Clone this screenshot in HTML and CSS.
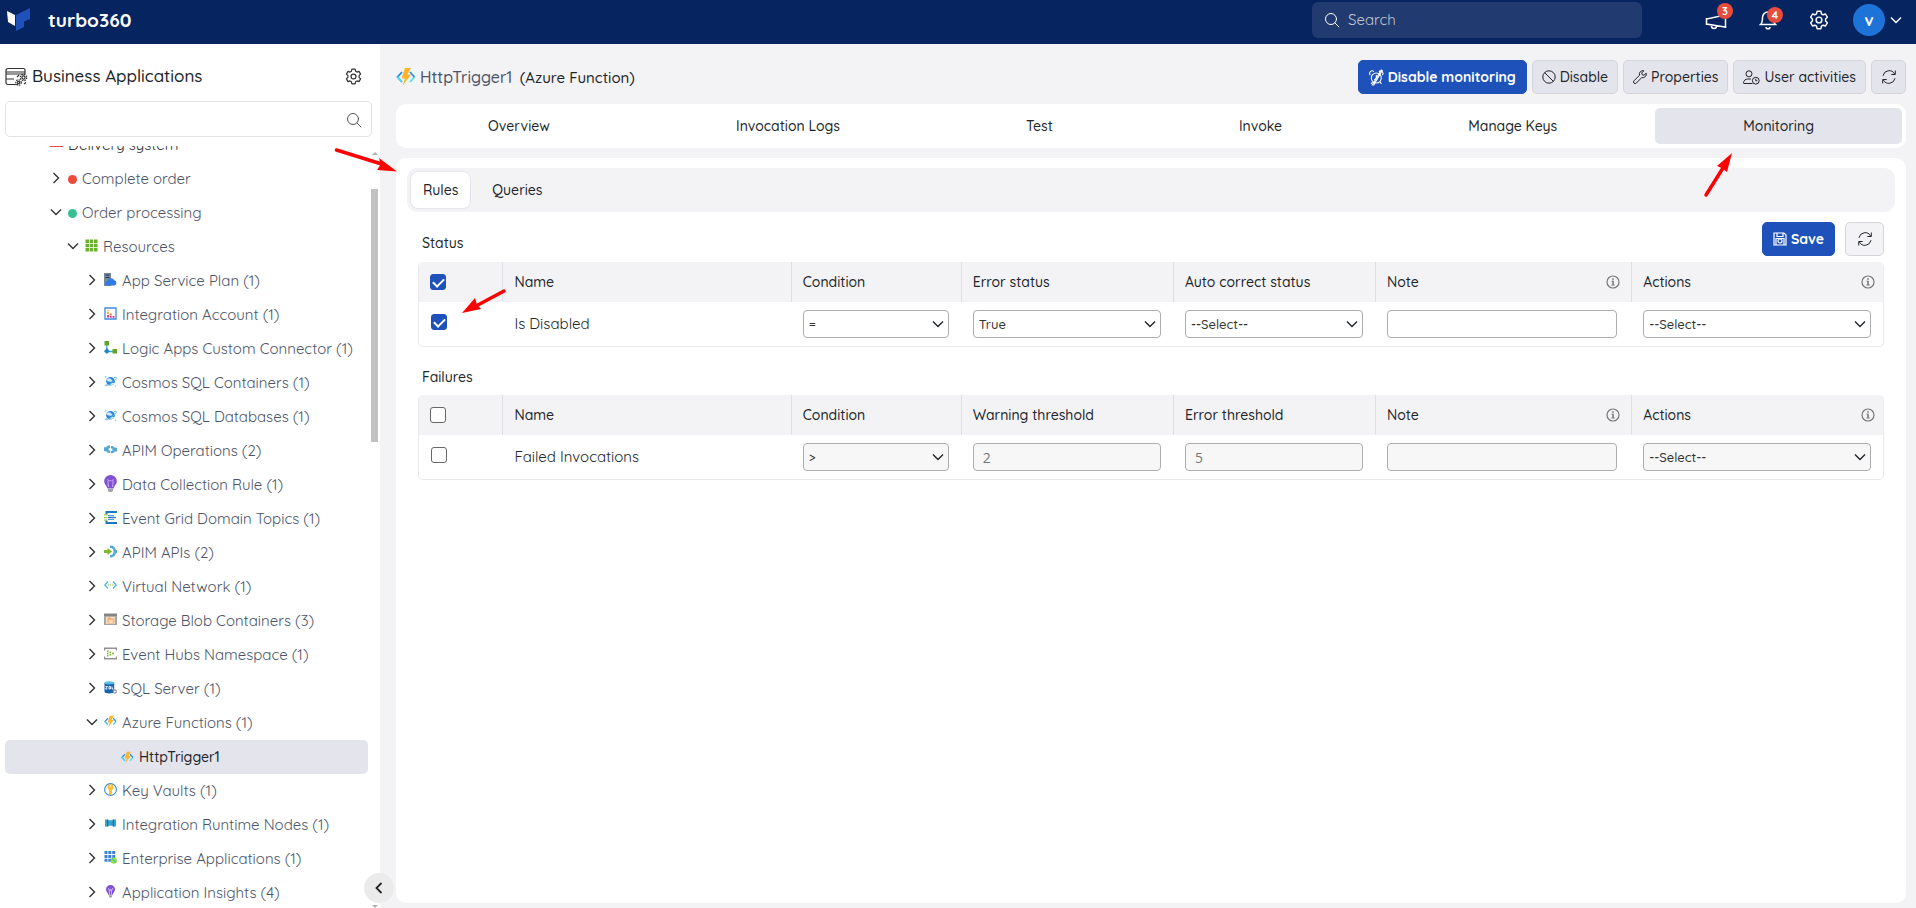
FILE: index.html
```
<!DOCTYPE html>
<html lang="en">
<head>
<meta charset="utf-8">
<title>turbo360 - HttpTrigger1 monitoring</title>
<link rel="stylesheet" href="styles.css">
</head>
<body>
<svg class="sprite" aria-hidden="true">
  <symbol id="i-search" viewBox="0 0 16 16"><g fill="none" stroke="currentColor" stroke-linecap="round"><circle cx="7" cy="7" r="5.5"/><path d="M11 11l4 4"/></g></symbol>
  <symbol id="i-gear" viewBox="0 0 18 18"><g fill="none" stroke="currentColor" stroke-width="1.3" stroke-linejoin="round"><path d="M7.3 1.2h3.4l.5 2.2 1.5.9 2.1-.7 1.7 2.9-1.600 1.600v1.800l1.600 1.600-1.700 2.900-2.100-.7-1.500.9-.5 2.200H7.300l-.5-2.200-1.500-.9-2.100.7-1.700-2.900 1.600-1.600V8.100L1.500 6.500l1.700-2.900 2.100.7 1.500-.9z"/><circle cx="9" cy="9" r="2.600"/></g></symbol>
  <symbol id="i-right" viewBox="0 0 14 14"><path d="M4.500 2l5 5-5 5" fill="none" stroke="currentColor" stroke-width="1.400"/></symbol>
  <symbol id="i-down" viewBox="0 0 14 14"><path d="M2 4.500l5 5 5-5" fill="none" stroke="currentColor" stroke-width="1.400"/></symbol>
  <symbol id="i-left" viewBox="0 0 14 14"><path d="M9.500 2l-5 5 5 5" fill="none" stroke="currentColor" stroke-width="1.800"/></symbol>
  <symbol id="i-refresh" viewBox="0 0 16 16"><g fill="none" stroke="currentColor"><path d="M2 6.800A6.200 6.200 0 0 1 13.600 5M14 9.200A6.200 6.200 0 0 1 2.400 11"/><path d="M14.300 1.500v4h-4M1.700 14.500v-4h4"/></g></symbol>
  <symbol id="i-info" viewBox="0 0 14 14"><circle cx="7" cy="7" r="6" fill="none" stroke="currentColor" stroke-width="1.200"/><path d="M6.200 3.200h1.600v1.500H6.200zM5.500 5.800h2.300v3.700h.9v.9H5.400v-.9h.9V6.700h-.8z" fill="currentColor"/></symbol>
  <symbol id="i-function" viewBox="0 0 20 18"><path d="M6 4L1.500 9 6 14" fill="none" stroke="#1f8fe0" stroke-width="1.800"/><path d="M1.500 9L6 14M18.500 9L14 14" fill="none" stroke="#4fdcf5" stroke-width="1.800"/><path d="M14 4l4.500 5" fill="none" stroke="#1f8fe0" stroke-width="1.800"/><path d="M9 0h6l-3.500 6.500H15L6.500 18 9 10.500H5.500z" fill="#fdb32b"/></symbol>
  <symbol id="i-grid" viewBox="0 0 13 13"><path d="M.5.500h3.500v3.500H.5zM4.700.5h3.500v3.500H4.700zM9 .5h3.500v3.500H9zM.5 4.700h3.500v3.500H.5zM4.700 4.700h3.500v3.500H4.700zM9 4.700h3.500v3.500H9zM.5 9h3.500v3.500H.5zM4.700 9h3.500v3.500H4.700zM9 9h3.500v3.500H9z" fill="#6bb02c"/></symbol>
  <symbol id="i-plan" viewBox="0 0 13 13"><path d="M0 0h7v13H0z" fill="#7c8791"/><path d="M1.500 1.500h4v1h-4zM1.500 4h4v1h-4z" fill="#123a72"/><path d="M3.500 12.500a2.300 2.300 0 0 1 0-4.600 3.600 3.600 0 0 1 6.800-.6 2.700 2.700 0 0 1 .2 5.200z" fill="#2f7be4"/></symbol>
  <symbol id="i-account" viewBox="0 0 13 13"><path d="M1 1h11v11H1z" fill="#fff" stroke="#3f87e5" stroke-width="1.300"/><path d="M3 5h2v2H3z" fill="#f6b53a"/><path d="M3 2.700h2v1.800H3z" fill="#f9d27a"/><path d="M3 8h2v2.500H3z" fill="#e0446b"/><path d="M5.700 6.500h2v2h-2z" fill="#ef6a50"/><path d="M6 9h1.700v1.700H6zM8.500 9h2v1.700h-2z" fill="#c83b97"/></symbol>
  <symbol id="i-logic" viewBox="0 0 13 13"><path d="M2.800 4v6.500H9" stroke="#45a5dd" stroke-width="1.300" fill="none"/><path d="M.5 0h4.500v4.500H.5zM8.500 8H13v4.500H8.500z" fill="#62a324"/><path d="M2.800 7l3 3.200-3 2.800-2.800-2.800z" fill="#2286c9"/></symbol>
  <symbol id="i-cosmos" viewBox="0 0 13 13"><circle cx="6.500" cy="6.200" r="4.300" fill="#2f86d8"/><path d="M3 4.300c1.500-1.800 3.400-.8 4.300.1s1.800 1 .7 1.800-3.300.8-5-.4zM6 9c1-1.200 3.300-1.200 4.300-.7C9.500 9.600 8 10.500 6.800 10.300z" fill="#c6e8f9"/><path d="M2.600 9.300c-2 1-1.800 2 .6 1.200s8.400-5 9-7-1-1.300-2.400-.7" fill="none" stroke="#55b5e8"/><path d="M1.800.500l.4 1 1 .4-1 .4-.4 1-.4-1-1-.4 1-.4zM11.500 10l.3.800.8.300-.8.300-.3.800-.3-.8-.8-.3.800-.3z" fill="#5cd5ef"/></symbol>
  <symbol id="i-ops" viewBox="0 0 13 13"><path d="M6 2.500H4.500a2.500 2.500 0 0 0-2.200 1.800H0v3.900h2.300A3 3 0 0 0 5 10h1.200V7.500H4.700V5.300H6zM7 3h1.200a3 3 0 0 1 2.500 1.700H13v3.800h-2.300A2.700 2.700 0 0 1 8.200 10.200H7V7.900h1.400V5.600H7z" fill="#52a8d2"/></symbol>
  <symbol id="i-bulb" viewBox="0 0 13 17"><path d="M6.500 0a6.300 6.300 0 0 1 6.300 6.200c0 3-2.500 4-3.200 7.300H3.400C2.700 10.200.2 9.200.2 6.200A6.300 6.300 0 0 1 6.500 0z" fill="#8350d4"/><path d="M4.500 12L3.800 5.500M8.500 12l.7-6.500M3.500 4.200l2 2 1-1 1 1 2-2" stroke="#d2b5f5" stroke-width=".9" fill="none"/><path d="M4 14h5v1.500l-1 1.500H5l-1-1.500z" fill="#a4a4aa"/></symbol>
  <symbol id="i-topics" viewBox="0 0 13 13"><path d="M1.500 0H13v2H3.500v1.500h-2zM1.500 13H13v-2H3.500V9.500h-2z" fill="#2273c3"/><path d="M4 4.700h6M4 8.300h6" stroke="#4d9fe0" stroke-width="1.200"/><path d="M0 3.300h3v1.300H0zM0 6h3.500v1.200H0zM0 8.500h3v1.300H0z" fill="#a6c84a"/><path d="M4 6.500h8" stroke="#2273c3" stroke-width="1.200"/></symbol>
  <symbol id="i-apis" viewBox="0 0 13 13"><path d="M6 .5C9 .2 11.300 2 12 5h1v3h-1c-.7 3-3 4.800-6 4.500V10c2.500.3 3.500-1.500 3.500-3.500S8.500 2.700 6 3z" fill="#59abd4"/><path d="M0 5h3.500V3L8 6.500 3.500 10V8H0z" fill="#7db928"/></symbol>
  <symbol id="i-vnet" viewBox="0 0 13 13"><path d="M4 2.500L.8 6 4 9.500M9 2.500L12.200 6 9 9.500" fill="none" stroke="#46b8ea" stroke-width="1.300"/><path d="M3.500 5.400h1.200v1.200H3.500zM5.900 5.400h1.200v1.200H5.900zM8.300 5.400h1.200v1.200H8.300z" fill="#75b52b"/></symbol>
  <symbol id="i-blob" viewBox="0 0 13 13"><path d="M0 .5h13v2.500H0z" fill="#858585"/><path d="M0 3h13v9H0z" fill="#a5a5a5"/><path d="M2 3.800h9V11H2z" fill="#f3e3d2"/><path d="M3.500 4.500h3l1 1h2.800v5H3.500z" fill="#f0a366"/><path d="M4.500 6.500h4.800v3.500H4.500z" fill="#fbd9b8"/></symbol>
  <symbol id="i-hubs" viewBox="0 0 13 13"><path d="M0 .5h13v3h-1.300V2H1.300v1.500H0zM0 12.500h13v-3h-1.300V11H1.300V9.500H0z" fill="#929292"/><path d="M3 3.500h1.500V5H3zM3 5.800h1.500v1.500H3zM3 8h1.500v1.500H3zM5.500 4.500H7V6H5.500zM5.500 7H7v1.500H5.500zM8 5.800h2v1.500H8z" fill="#7dbb35"/></symbol>
  <symbol id="i-sql" viewBox="0 0 13 13"><path d="M.5 1.800v9c0 1 2.300 1.700 4.800 1.700s4.900-.7 4.900-1.700v-9z" fill="#1763ad"/><ellipse cx="5.300" cy="1.800" rx="4.800" ry="1.600" fill="#57c1ea"/><path d="M1.500 5.500h2L1.500 8h2M5 5.500h1.500V8H5zM8 5.500V8h1.500" stroke="#fff" stroke-width=".9" fill="none"/><circle cx="10.800" cy="10.500" r="1.600" fill="#fff" stroke="#8a8f96" stroke-width="1.100"/></symbol>
  <symbol id="i-vault" viewBox="0 0 13 13"><circle cx="6.500" cy="6.500" r="5.900" fill="#fff" stroke="#3989d6" stroke-width="1.100"/><path d="M6.500 1a3.200 3.200 0 0 1 1.400 6v3.500l-1.400 1.700-1.400-1.700V7a3.200 3.200 0 0 1 1.400-6z" fill="#fbc02d"/><circle cx="6.500" cy="3" r=".8" fill="#fff"/></symbol>
  <symbol id="i-runtime" viewBox="0 0 13 13"><path d="M1 2.500h2.700l.8.800h4l.8-.8H12v7H9.300l-.8-.8h-4l-.8.800H1z" fill="#37a3cf"/><path d="M3 2.500h1.200v7H3zM8.800 2.500H10v7H8.800z" fill="#1c6fa0"/></symbol>
  <symbol id="i-enterprise" viewBox="0 0 13 13"><path d="M.5 0h3v3h-3zM4.300 0h3v3h-3zM8.200 0h3v3h-3zM.5 3.900h3v3h-3zM4.300 3.900h3v3h-3zM8.200 3.900h3v3h-3zM.5 7.800h3v3h-3zM4.300 7.800h3v3h-3z" fill="#3b82d6"/><circle cx="9.800" cy="9.600" r="3.200" fill="#8fdc4f"/><path d="M8 8l4 3.500" stroke="#43b9a5"/></symbol>
  <symbol id="i-insights" viewBox="0 0 13 13"><path d="M6.500 0A4.400 4.400 0 0 1 11 4.300C11 6.500 9.200 7.500 8.700 9.800H4.300C3.800 7.500 2 6.500 2 4.300A4.400 4.400 0 0 1 6.500 0z" fill="#8350d4"/><path d="M4.300 3l1.200 3 1-2 1 2 1.200-3M5.500 6v3.500M7.500 6v3.500" stroke="#e0cdf9" stroke-width=".8" fill="none"/><path d="M4.700 10.200h3.600l-.7 2.300H5.400z" fill="#9a9aa3"/></symbol>
</svg>

<header class="topbar">
  <a class="brand" href="#" aria-label="turbo360 home">
    <svg class="brand-mark" viewBox="0 0 24 24" aria-hidden="true"><path d="M0 3l8 4v11l-7-4z" fill="#fff"/><path d="M23 0v11l-6 2.500v5.500l-8 4V7z" fill="#1e52ba"/></svg>
    <span>turbo360</span>
  </a>
  <label class="global-search">
    <svg width="16" height="16" aria-hidden="true"><use href="#i-search"/></svg>
    <input type="search" placeholder="Search" aria-label="Search">
  </label>
  <div class="top-actions">
    <button class="top-button" aria-label="Announcements">
      <svg width="22" height="22" viewBox="0 0 22 22" fill="none" stroke="currentColor" stroke-width="1.500" aria-hidden="true"><path d="M20.500 5v14M20 6L1.500 10v5L20 18M1.500 9v7M6.500 16v1a2.500 2.500 0 0 0 5 0"/></svg>
      <span class="badge">3</span>
    </button>
    <button class="top-button" aria-label="Notifications">
      <svg width="18" height="20" viewBox="0 0 18 20" fill="none" stroke="currentColor" stroke-width="1.500" aria-hidden="true"><path d="M1.500 14.500h15c-1.800-1.500-2-3-2-7A5.500 5.500 0 0 0 9 2a5.500 5.500 0 0 0-5.500 5.500c0 4-.2 5.500-2 7zM7 17a2 1.800 0 0 0 4 0"/></svg>
      <span class="badge low">4</span>
    </button>
    <button class="top-button" aria-label="Settings"><svg width="20" height="20" aria-hidden="true"><use href="#i-gear"/></svg></button>
    <button class="profile" aria-label="Account menu"><span class="avatar">v</span><svg width="14" height="14" aria-hidden="true"><use href="#i-down"/></svg></button>
  </div>
</header>

<div class="shell">
  <aside class="sidebar">
    <div class="sidebar-title">
      <svg width="23" height="19" viewBox="0 0 23 19" fill="none" stroke="#333" stroke-width="1.200" aria-hidden="true"><path d="M13 17.500H3a2 2 0 0 1-2-2v-12a2 2 0 0 1 2-2h15.500a1.500 1.500 0 0 1 1.500 1.500V7H1M1 5h19M1 12h8"/><circle cx="18.500" cy="10.500" r="1.600"/><circle cx="18.500" cy="10.500" r="3.200" stroke-dasharray="1.500 1"/><circle cx="13.500" cy="15.500" r="1.200"/><circle cx="13.500" cy="15.500" r="2.700" stroke-dasharray="1.500 1"/><path d="M12 10l2-2M19 17l2-1.500"/></svg>
      <h1>Business Applications</h1>
      <button class="plain" aria-label="Application settings"><svg width="17" height="17" aria-hidden="true"><use href="#i-gear"/></svg></button>
    </div>
    <label class="tree-search">
      <input type="text" aria-label="Filter applications">
      <svg width="16" height="16" aria-hidden="true"><use href="#i-search"/></svg>
    </label>
    <div class="tree-area">
      <ul class="tree">
        <li class="node level-0"><i class="app-bar"></i><span>Delivery system</span></li>
        <li class="node level-1"><svg class="chev"><use href="#i-right"/></svg><i class="dot red"></i><span>Complete order</span></li>
        <li class="node level-1"><svg class="chev"><use href="#i-down"/></svg><i class="dot green"></i><span>Order processing</span></li>
        <li class="node level-2"><svg class="chev"><use href="#i-down"/></svg><svg class="ico"><use href="#i-grid"/></svg><span>Resources</span></li>
        <li class="node level-3"><svg class="chev"><use href="#i-right"/></svg><svg class="ico"><use href="#i-plan"/></svg><span>App Service Plan (1)</span></li>
        <li class="node level-3"><svg class="chev"><use href="#i-right"/></svg><svg class="ico"><use href="#i-account"/></svg><span>Integration Account (1)</span></li>
        <li class="node level-3"><svg class="chev"><use href="#i-right"/></svg><svg class="ico"><use href="#i-logic"/></svg><span>Logic Apps Custom Connector (1)</span></li>
        <li class="node level-3"><svg class="chev"><use href="#i-right"/></svg><svg class="ico"><use href="#i-cosmos"/></svg><span>Cosmos SQL Containers (1)</span></li>
        <li class="node level-3"><svg class="chev"><use href="#i-right"/></svg><svg class="ico"><use href="#i-cosmos"/></svg><span>Cosmos SQL Databases (1)</span></li>
        <li class="node level-3"><svg class="chev"><use href="#i-right"/></svg><svg class="ico"><use href="#i-ops"/></svg><span>APIM Operations (2)</span></li>
        <li class="node level-3"><svg class="chev"><use href="#i-right"/></svg><svg class="ico tall"><use href="#i-bulb"/></svg><span>Data Collection Rule (1)</span></li>
        <li class="node level-3"><svg class="chev"><use href="#i-right"/></svg><svg class="ico"><use href="#i-topics"/></svg><span>Event Grid Domain Topics (1)</span></li>
        <li class="node level-3"><svg class="chev"><use href="#i-right"/></svg><svg class="ico"><use href="#i-apis"/></svg><span>APIM APIs (2)</span></li>
        <li class="node level-3"><svg class="chev"><use href="#i-right"/></svg><svg class="ico"><use href="#i-vnet"/></svg><span>Virtual Network (1)</span></li>
        <li class="node level-3"><svg class="chev"><use href="#i-right"/></svg><svg class="ico"><use href="#i-blob"/></svg><span>Storage Blob Containers (3)</span></li>
        <li class="node level-3"><svg class="chev"><use href="#i-right"/></svg><svg class="ico"><use href="#i-hubs"/></svg><span>Event Hubs Namespace (1)</span></li>
        <li class="node level-3"><svg class="chev"><use href="#i-right"/></svg><svg class="ico"><use href="#i-sql"/></svg><span>SQL Server (1)</span></li>
        <li class="node level-3"><svg class="chev"><use href="#i-down"/></svg><svg class="ico"><use href="#i-function"/></svg><span>Azure Functions (1)</span></li>
        <li class="node level-4 selected"><svg class="ico"><use href="#i-function"/></svg><span>HttpTrigger1</span></li>
        <li class="node level-3"><svg class="chev"><use href="#i-right"/></svg><svg class="ico"><use href="#i-vault"/></svg><span>Key Vaults (1)</span></li>
        <li class="node level-3"><svg class="chev"><use href="#i-right"/></svg><svg class="ico"><use href="#i-runtime"/></svg><span>Integration Runtime Nodes (1)</span></li>
        <li class="node level-3"><svg class="chev"><use href="#i-right"/></svg><svg class="ico"><use href="#i-enterprise"/></svg><span>Enterprise Applications (1)</span></li>
        <li class="node level-3"><svg class="chev"><use href="#i-right"/></svg><svg class="ico"><use href="#i-insights"/></svg><span>Application Insights (4)</span></li>
      </ul>
      <div class="scrollbar" aria-hidden="true"><i class="arrow-up"></i><i class="thumb"></i><i class="arrow-down"></i></div>
    </div>
    <button class="collapse" aria-label="Collapse sidebar"><svg width="14" height="14" aria-hidden="true"><use href="#i-left"/></svg></button>
    <svg class="pointer pointer-panel" width="64" height="26" viewBox="0 0 64 26" aria-hidden="true"><path d="M2.500 3L46 16.500" stroke="#f00" stroke-width="3.500" stroke-linecap="round"/><path d="M63 24.500l-20-1.500 3.500-5.500L45 11z" fill="#f00"/></svg>
  </aside>

  <main class="main">
    <div class="page-head">
      <svg class="page-icon" width="20" height="18" aria-hidden="true"><use href="#i-function"/></svg>
      <h2><span class="resource">HttpTrigger1</span> <span class="kind">(Azure Function)</span></h2>
      <div class="page-actions">
        <button class="btn primary"><svg width="15" height="17" viewBox="0 0 15 17" fill="none" stroke="currentColor" stroke-width="1.100" aria-hidden="true"><circle cx="7.300" cy="9" r="5"/><path d="M7.300 6v3l-2 2M1.300 6A2.300 2.300 0 0 1 4.800 2.600M9.800 2.600A2.300 2.300 0 0 1 13.300 6M3.500 13L2 15M11 13l1.500 2M12.500.5L3 16.500M13.500 1L4.500 16.500"/></svg>Disable monitoring</button>
        <button class="btn"><svg width="14" height="14" viewBox="0 0 14 14" fill="none" stroke="currentColor" aria-hidden="true"><circle cx="7" cy="7" r="6.200"/><path d="M2.600 2.600l8.800 8.800"/></svg>Disable</button>
        <button class="btn"><svg width="14" height="14" viewBox="0 0 14 14" fill="none" stroke="currentColor" aria-hidden="true"><path d="M10.800.8a3.500 3.500 0 0 0-4.300 4.400L1 10.800a1.600 1.600 0 0 0 2.300 2.300l5.500-5.600a3.500 3.500 0 0 0 4.400-4.300L11 5.200 9.200 4.800 8.700 3z"/></svg>Properties</button>
        <button class="btn"><svg width="17" height="15" viewBox="0 0 17 15" fill="none" stroke="currentColor" aria-hidden="true"><circle cx="6" cy="3.800" r="3"/><path d="M9.500 13.500H1c-.5 0-.5-.3-.5-.8C.7 10.500 2.500 9 4.500 9H8"/><circle cx="12.800" cy="10.700" r="3.400"/><path d="M12.800 8.800v2h1.600"/></svg>User activities</button>
        <button class="btn square" aria-label="Refresh"><svg width="16" height="16" aria-hidden="true"><use href="#i-refresh"/></svg></button>
      </div>
    </div>

    <nav class="tabs">
      <button>Overview</button>
      <button>Invocation Logs</button>
      <button>Test</button>
      <button>Invoke</button>
      <button>Manage Keys</button>
      <button class="active">Monitoring</button>
    </nav>

    <section class="panel">
      <svg class="pointer pointer-tab" width="30" height="46" viewBox="0 0 30 46" aria-hidden="true"><path d="M3 43L20 16" stroke="#f00" stroke-width="3.500" stroke-linecap="round"/><path d="M29 1l-5 19-4.500-3.500L14 14z" fill="#f00"/></svg>
      <div class="subtabs">
        <button class="active">Rules</button>
        <button>Queries</button>
      </div>
      <div class="rules">
        <div class="rules-head">
          <h3>Status</h3>
          <button class="btn primary save"><svg width="14" height="14" viewBox="0 0 14 14" fill="none" stroke="currentColor" stroke-width="1.200" aria-hidden="true"><path d="M1 1h10l2 2v10H1zM4 1v3.500h6V1"/><circle cx="7" cy="9" r="2"/><path d="M3 13V6.500h8V13"/></svg>Save</button>
          <button class="btn light" aria-label="Reload rules"><svg width="16" height="16" aria-hidden="true"><use href="#i-refresh"/></svg></button>
        </div>
        <div class="table-box">
        <table>
          <colgroup><col class="c-check"><col class="c-name"><col class="c-cond"><col class="c-warn"><col class="c-err"><col class="c-note"><col class="c-act"></colgroup>
          <thead><tr>
            <th><input type="checkbox" checked aria-label="Select all status rules"></th>
            <th>Name</th><th>Condition</th><th>Error status</th><th>Auto correct status</th>
            <th><div class="with-info">Note<svg width="14" height="14" aria-hidden="true"><use href="#i-info"/></svg></div></th>
            <th><div class="with-info">Actions<svg width="14" height="14" aria-hidden="true"><use href="#i-info"/></svg></div></th>
          </tr></thead>
          <tbody><tr>
            <td class="check-cell"><input type="checkbox" checked aria-label="Is Disabled">
              <svg class="pointer pointer-check" width="46" height="26" viewBox="0 0 46 26" aria-hidden="true"><path d="M43 3L15 18" stroke="#f00" stroke-width="3.500" stroke-linecap="round"/><path d="M1 25l13-15 2 6.500 4 4.500z" fill="#f00"/></svg></td>
            <td>Is Disabled</td>
            <td><div class="pick"><select aria-label="Condition"><option>=</option></select><svg><use href="#i-down"/></svg></div></td>
            <td><div class="pick"><select aria-label="Error status"><option>True</option></select><svg><use href="#i-down"/></svg></div></td>
            <td><div class="pick"><select aria-label="Auto correct status"><option>--Select--</option></select><svg><use href="#i-down"/></svg></div></td>
            <td><input type="text" aria-label="Note"></td>
            <td><div class="pick"><select aria-label="Actions"><option>--Select--</option></select><svg><use href="#i-down"/></svg></div></td>
          </tr></tbody>
        </table>
        </div>

        <h3 class="group-title">Failures</h3>
        <div class="table-box">
        <table>
          <colgroup><col class="c-check"><col class="c-name"><col class="c-cond"><col class="c-warn"><col class="c-err"><col class="c-note"><col class="c-act"></colgroup>
          <thead><tr>
            <th><input type="checkbox" aria-label="Select all failure rules"></th>
            <th>Name</th><th>Condition</th><th>Warning threshold</th><th>Error threshold</th>
            <th><div class="with-info">Note<svg width="14" height="14" aria-hidden="true"><use href="#i-info"/></svg></div></th>
            <th><div class="with-info">Actions<svg width="14" height="14" aria-hidden="true"><use href="#i-info"/></svg></div></th>
          </tr></thead>
          <tbody><tr>
            <td class="check-cell"><input type="checkbox" aria-label="Failed Invocations"></td>
            <td>Failed Invocations</td>
            <td><div class="pick"><select disabled aria-label="Condition"><option>&gt;</option></select><svg><use href="#i-down"/></svg></div></td>
            <td><input type="text" value="2" disabled aria-label="Warning threshold"></td>
            <td><input type="text" value="5" disabled aria-label="Error threshold"></td>
            <td><input type="text" disabled aria-label="Note"></td>
            <td><div class="pick"><select disabled aria-label="Actions"><option>--Select--</option></select><svg><use href="#i-down"/></svg></div></td>
          </tr></tbody>
        </table>
        </div>
      </div>
    </section>
  </main>
</div>
</body>
</html>
```
FILE: styles.css
```
* { box-sizing: border-box; }
body {
  margin: 0;
  height: 100vh;
  display: flex;
  flex-direction: column;
  overflow: hidden;
  background: #f3f3f6;
  color: #212529;
  font: 14px/20px Quicksand, Lato, "Open Sans", sans-serif;
}
button, input, select { font: inherit; color: inherit; }
button { cursor: pointer; border: 0; background: none; padding: 0; }
h1, h2, h3 { margin: 0; font-weight: 500; }
svg { flex: none; display: block; }
.sprite { display: none; }

/* Top bar */
.topbar {
  flex: none;
  height: 44px;
  display: flex;
  align-items: center;
  background: #06245f;
  color: #fff;
  padding: 0 13px 4px 7px;
}
.brand {
  display: flex;
  align-items: center;
  gap: 17px;
  margin-right: auto;
  color: #fff;
  text-decoration: none;
  font-size: 19px;
  font-weight: 700;
}
.brand-mark { width: 24px; height: 24px; }
.global-search {
  width: 330px;
  height: 36px;
  display: flex;
  align-items: center;
  gap: 6px;
  padding: 0 12px;
  border-radius: 6px;
  background: #213a70;
}
.global-search input {
  flex: 1;
  min-width: 0;
  border: 0;
  outline: 0;
  background: none;
  font-size: 15px;
}
.global-search input::placeholder { color: #c3c6ce; opacity: 1; }
.top-actions { display: flex; align-items: center; gap: 32px; margin-left: 63px; }
.top-button { position: relative; }
.badge {
  position: absolute;
  top: -6px;
  right: -6px;
  width: 16px;
  height: 16px;
  border-radius: 50%;
  background: #e74c3c;
  font-size: 11px;
  font-weight: 700;
  line-height: 16px;
  text-align: center;
}
.badge.low { top: -3px; }
.profile { display: flex; align-items: center; gap: 4px; margin-left: -8px; }
.avatar {
  width: 32px;
  height: 32px;
  border-radius: 50%;
  background: #1e73d8;
  font-size: 16px;
  font-weight: 700;
  line-height: 32px;
}

/* Sidebar */
.shell { flex: 1; min-height: 0; display: flex; }
.sidebar {
  position: relative;
  flex: none;
  width: 380px;
  display: flex;
  flex-direction: column;
  background: #fff;
  padding-top: 17px;
}
.sidebar-title { display: flex; align-items: center; gap: 4px; height: 30px; padding: 0 18px 0 5px; }
.sidebar-title h1 { flex: 1; font-size: 17px; }
.plain { color: #333; }
.tree-search {
  height: 36px;
  margin: 10px 8px 0 5px;
  display: flex;
  align-items: center;
  padding: 1px 9px 0;
  border: 1px solid #e4e4e6;
  border-radius: 5px;
  color: #555;
}
.tree-search input { flex: 1; border: 0; outline: 0; background: none; }
.tree-area { flex: 1; min-height: 0; overflow: hidden; display: flex; margin-top: 9px; }
.tree { flex: 1; list-style: none; margin: -18px 0 0; padding: 0 3px 0 5px; color: #4d5468; font-size: 15px; }
.node { display: flex; align-items: center; gap: 5px; height: 34px; white-space: nowrap; border-radius: 5px; }
.chev { width: 14px; height: 14px; margin-bottom: 3px; color: #333; }
.ico { width: 13px; height: 13px; margin-bottom: 3px; }
.ico.tall { height: 17px; }
.level-0 { padding-left: 45px; color: #333; }
.level-1 { padding-left: 44px; }
.level-2 { padding-left: 61px; }
.level-3 { padding-left: 80px; }
.level-4 { padding-left: 116px; }
.selected { background: #e4e4ec; color: #212529; font-size: 14px; font-weight: 500; }
.selected .ico { margin-bottom: 0; }
.dot { width: 9px; height: 9px; border-radius: 50%; }
.red { background: #eb4a3c; }
.green { background: #35bf94; }
.app-bar { width: 13px; height: 4px; background: #eb4a3c; }
.scrollbar { width: 9px; display: flex; flex-direction: column; align-items: center; padding: 6px 2px 0 0; }
.thumb { width: 7px; height: 253px; margin: 34px 0 auto; background: #c1c1c1; }
.arrow-up { border: 3px solid transparent; border-top: 0; border-bottom-color: #b0b0b0; }
.arrow-down { border: 3px solid transparent; border-bottom: 0; border-top-color: #b0b0b0; }
.collapse {
  position: absolute;
  right: -14px;
  bottom: 5px;
  width: 30px;
  height: 30px;
  display: grid;
  place-items: center;
  border-radius: 50%;
  background: #ebebec;
}

/* Main column */
.main { flex: 1; min-width: 0; display: flex; flex-direction: column; padding: 16px 10px 5px 16px; }
.page-head { display: flex; align-items: center; gap: 4px; height: 34px; }
.page-head h2 { flex: 1; font-size: 16px; white-space: pre; }
.resource { color: #4d5468; margin-right: 3px; }
.kind { font-size: 15px; }
.page-actions { display: flex; gap: 5px; }
.btn {
  height: 34px;
  display: flex;
  align-items: center;
  justify-content: center;
  gap: 4px;
  padding: 0 9px;
  border: 1px solid #d5d5d9;
  border-radius: 5px;
  background: #e4e4ec;
  font-weight: 500;
  white-space: nowrap;
}
.btn.primary { border-color: #1e52ba; background: #1e52ba; color: #fff; font-weight: 700; padding: 0 10px; }
.btn.light { width: 39px; padding: 0; background: #f3f3f6; }
.btn.square { width: 35px; padding: 0; }
.tabs { display: flex; gap: 10px; margin-top: 10px; padding: 4px; border-radius: 10px; background: #fff; }
.tabs button { flex: 1 1 auto; height: 36px; border-radius: 5px; font-weight: 500; }
.tabs .active { background: #e4e4ec; }
.panel { position: relative; flex: 1; margin-top: 10px; padding: 10px 11px; border-radius: 10px; background: #fff; }
.subtabs { display: flex; gap: 8px; padding: 3px; border-radius: 10px; background: #f3f3f6; }
.subtabs button { height: 38px; padding: 0 12px; border: 1px solid transparent; border-radius: 8px; font-weight: 500; }
.subtabs .active { border-color: #e4e4ec; background: #fff; }
.rules { padding: 10px 11px 0; }
.rules h3 { flex: 1; padding-left: 4px; font-size: 14px; }
.rules-head { display: flex; gap: 10px; margin-bottom: 6px; }
.rules-head h3 { align-self: flex-end; padding-bottom: 3px; }
.rules .group-title { padding: 20px 4px 8px; }

/* Rule tables */
.table-box { border: 1px solid #e9e9ec; border-top: 0; border-radius: 5px; }
table { width: 100%; table-layout: fixed; border-collapse: separate; border-spacing: 0; font-size: 15px; }
.c-check { width: 5.7%; }
.c-name { width: 19.7%; }
.c-cond { width: 11.6%; }
.c-warn { width: 14.5%; }
.c-err { width: 13.8%; }
.c-note { width: 17.5%; }
.c-act { width: 17.2%; }
th { height: 40px; padding: 0 11px; background: #f3f3f6; font-size: 14px; font-weight: 500; text-align: left; }
th + th { border-left: 1px solid #dcdfe6; }
th:first-child { border-top-left-radius: 5px; }
th:last-child { border-top-right-radius: 5px; padding-right: 8px; }
td { height: 44px; padding: 0 12px; }
td:nth-child(6) { padding-right: 14px; }
.with-info { display: flex; align-items: center; justify-content: space-between; }
.with-info svg { color: #777; }
.check-cell { position: relative; }
input[type="checkbox"] {
  appearance: none;
  display: grid;
  place-items: center;
  width: 16px;
  height: 16px;
  margin: 0;
  border: 1px solid #666;
  border-radius: 3px;
  background: #fff;
}
.check-cell input[type="checkbox"] { margin-bottom: 4px; }
input[type="checkbox"]:checked { border-color: #1e52ba; background: #1e52ba; }
input[type="checkbox"]:checked::before {
  content: "";
  width: 5px;
  height: 9px;
  margin-bottom: 2px;
  border: solid #fff;
  border-width: 0 2px 2px 0;
  transform: rotate(45deg);
}
.pick { position: relative; }
.pick svg { position: absolute; right: 4px; top: 7px; width: 14px; height: 14px; pointer-events: none; }
td select, td input[type="text"] {
  display: block;
  width: 100%;
  height: 28px;
  border: 1px solid #adadb0;
  border-radius: 4px;
  background: #fff;
  color: #333;
  opacity: 1;
}
td select { appearance: none; padding: 0 5px; font-size: 13px; font-weight: 500; }
td input[type="text"] { padding: 0 9px; font-size: 14px; font-family: "Open Sans", sans-serif; }
td select:disabled, td input[type="text"]:disabled { background: #f7f7f7; }
td input[type="text"]:disabled { color: #777; }

/* Red pointer arrows laid over the page */
.pointer { position: absolute; z-index: 2; pointer-events: none; }
.pointer-panel { top: 103px; left: 334px; }
.pointer-tab { top: -6px; right: 173px; }
.pointer-check { top: -14px; left: 42px; }
```
